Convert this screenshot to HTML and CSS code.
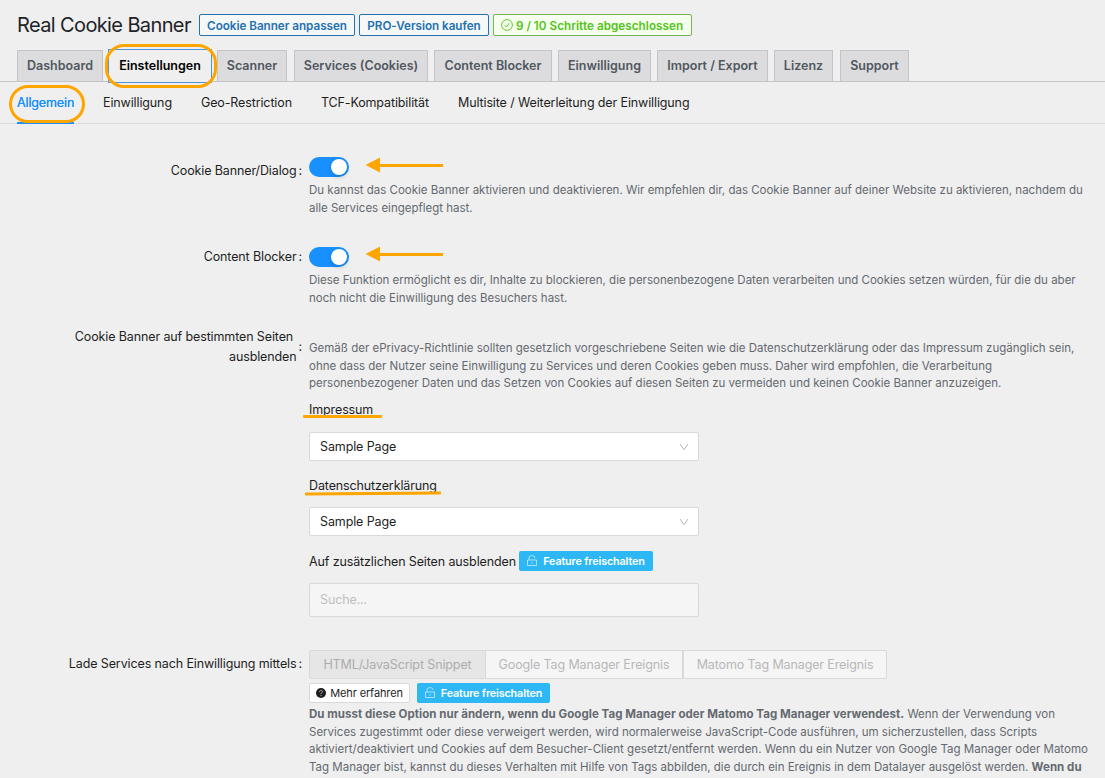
FILE: index.html
```
<!DOCTYPE html>
<html lang="de">
<head>
  <meta charset="UTF-8" />
  <meta name="viewport" content="width=device-width, initial-scale=1.0"/>
  <title>Real Cookie Banner</title>
  <link rel="stylesheet" href="styles.css">
</head>
<body>

  <svg class="icon-defs">
    <symbol id="lock" viewBox="0 0 10 11">
      <path d="M.5 5h9v5.5h-9zM2 5V3a2.3 2.3 0 0 1 2.3-2.3h1.4A2.3 2.3 0 0 1 8 2.7V3M5 7v1.6" fill="none" stroke="currentColor" stroke-width=".8"/>
    </symbol>
    <symbol id="chevron" viewBox="0 0 10 8">
      <path d="M1 1l4 5.6L9 1" fill="none" stroke="currentColor" stroke-width="1"/>
    </symbol>
    <symbol id="arrow" viewBox="0 0 78 16">
      <path d="M.5 8L15 .5v15z" fill="#ffa500"/>
      <path d="M13 8.500h65" stroke="#ffa500" stroke-width="2.800"/>
    </symbol>
  </svg>

  <header class="header">
    <h1>Real Cookie Banner</h1>
    <a class="button customize">Cookie Banner anpassen</a>
    <a class="button pro">PRO-Version kaufen</a>
    <a class="button steps">
      <svg width="12" height="12" viewBox="0 0 12 12"><circle cx="6" cy="6" r="5.4"/><path d="M3.700 6.100l1.700 1.900 2.900-3.800"/></svg>
      <span>9 / 10 Schritte abgeschlossen</span>
    </a>
  </header>

  <nav class="tabs">
    <a class="tab dashboard">Dashboard</a>
    <a class="tab settings active">Einstellungen<i class="mark mark-tab"></i></a>
    <a class="tab scanner">Scanner</a>
    <a class="tab services">Services (Cookies)</a>
    <a class="tab blocker">Content Blocker</a>
    <a class="tab consent">Einwilligung</a>
    <a class="tab import">Import / Export</a>
    <a class="tab license">Lizenz</a>
    <a class="tab support">Support</a>
  </nav>

  <nav class="subnav">
    <a class="current">Allgemein<i class="mark mark-sub"></i></a>
    <a>Einwilligung</a>
    <a>Geo-Restriction</a>
    <a>TCF-Kompatibilität</a>
    <a>Multisite / Weiterleitung der Einwilligung</a>
  </nav>

  <main class="form">
    <div class="row row-banner">
      <div class="label"><span>Cookie Banner/Dialog</span><b>:</b></div>
      <div class="field">
        <div class="switch-line"><span class="switch"></span><svg class="arrow"><use href="#arrow"/></svg></div>
        <p class="description">Du kannst das Cookie Banner aktivieren und deaktivieren. Wir empfehlen dir, das Cookie Banner auf deiner Website zu aktivieren, nachdem du<br>alle Services eingepflegt hast.</p>
      </div>
    </div>

    <div class="row row-blocker">
      <div class="label"><span>Content Blocker</span><b>:</b></div>
      <div class="field">
        <div class="switch-line"><span class="switch"></span><svg class="arrow"><use href="#arrow"/></svg></div>
        <p class="description">Diese Funktion ermöglicht es dir, Inhalte zu blockieren, die personenbezogene Daten verarbeiten und Cookies setzen würden, für die du aber<br>noch nicht die Einwilligung des Besuchers hast.</p>
      </div>
    </div>

    <div class="row row-pages">
      <div class="label"><span>Cookie Banner auf bestimmten Seiten&nbsp;<br>ausblenden</span><b>:</b></div>
      <div class="field">
        <p class="description">Gemäß der ePrivacy-Richtlinie sollten gesetzlich vorgeschriebene Seiten wie die Datenschutzerklärung oder das Impressum zugänglich sein,<br>ohne dass der Nutzer seine Einwilligung zu Services und deren Cookies geben muss. Daher wird empfohlen, die Verarbeitung<br>personenbezogener Daten und das Setzen von Cookies auf diesen Seiten zu vermeiden und keinen Cookie Banner anzuzeigen.</p>
        <div class="caption imprint">Impressum<i class="underline"></i></div>
        <div class="select"><span>Sample Page</span><svg><use href="#chevron"/></svg></div>
        <div class="caption privacy">Datenschutzerklärung<i class="underline"></i></div>
        <div class="select"><span>Sample Page</span><svg><use href="#chevron"/></svg></div>
        <div class="caption extra"><span>Auf zusätzlichen Seiten ausblenden</span><a class="unlock"><svg><use href="#lock"/></svg>Feature freischalten</a></div>
        <div class="search">Suche...</div>
      </div>
    </div>

    <div class="row row-load">
      <div class="label"><span>Lade Services nach Einwilligung mittels</span><b>:</b></div>
      <div class="field">
        <div class="radios">
          <span class="radio html checked">HTML/JavaScript Snippet</span>
          <span class="radio google">Google Tag Manager Ereignis</span>
          <span class="radio matomo">Matomo Tag Manager Ereignis</span>
        </div>
        <div class="actions">
          <a class="more"><svg width="10" height="10" viewBox="0 0 10 10"><circle cx="5" cy="5" r="5" fill="#1e1e1e"/><path d="M3.500 3.900c0-2 3-2 3-.2 0 1.100-1.500 1-1.500 2.100M5 6.800v1.100" fill="none" stroke="#bbb" stroke-width="1"/></svg>Mehr erfahren</a>
          <a class="unlock"><svg><use href="#lock"/></svg>Feature freischalten</a>
        </div>
        <p class="description"><strong>Du musst diese Option nur ändern, wenn du Google Tag Manager oder Matomo Tag Manager verwendest.</strong> Wenn der Verwendung von<br>Services zugestimmt oder diese verweigert werden, wird normalerweise JavaScript-Code ausführen, um sicherzustellen, dass Scripts<br>aktiviert/deaktiviert und Cookies auf dem Besucher-Client gesetzt/entfernt werden. Wenn du ein Nutzer von Google Tag Manager oder Matomo<br>Tag Manager bist, kannst du dieses Verhalten mit Hilfe von Tags abbilden, die durch ein Ereignis in dem Datalayer ausgelöst werden. <strong>Wenn du</strong></p>
      </div>
    </div>
  </main>

</body>
</html>
```
FILE: styles.css
```
* {
  box-sizing: border-box;
}
body {
  margin: 0;
  height: 778px;
  overflow: hidden;
  background-color: #efefef;
  color: #1e1e1e;
  font-family: Inter, "Liberation Sans", sans-serif;
  font-size: 12.5px;
  letter-spacing: -0.12px;
  white-space: nowrap;
}
.icon-defs {
  display: none;
}
.header {
  display: flex;
  align-items: center;
  gap: 4px;
  height: 50px;
  padding-left: 17px;
}
h1 {
  width: 178px;
  margin: 0;
  color: #1d2327;
  font-size: 20px;
  font-weight: 400;
  letter-spacing: -0.62px;
}
.button {
  display: flex;
  align-items: center;
  justify-content: center;
  gap: 3px;
  height: 22px;
  padding-top: 1px;
  border: 1px solid #2271b1;
  border-radius: 2px;
  background-color: #f6f7f7;
  color: #2271b1;
  font-size: 11.7px;
  font-weight: 600;
  letter-spacing: -0.03px;
}
.customize {
  width: 156px;
}
.pro {
  width: 130px;
}
.steps {
  width: 199px;
  padding-right: 1px;
  border-color: #77b359;
  background-color: #f6ffed;
  color: #52c41a;
  letter-spacing: 0.04px;
}
.steps svg {
  margin-top: -1px;
  fill: none;
  stroke: currentColor;
  stroke-width: 0.9;
}
.tabs {
  display: flex;
  height: 32px;
  padding-left: 17px;
  border-bottom: 1px solid #c3c4c7;
}
.tab {
  display: flex;
  align-items: center;
  justify-content: center;
  height: 31px;
  padding-bottom: 1px;
  border: 1px solid #c3c4c7;
  border-bottom: none;
  background-color: #dcdcde;
  color: #50575e;
  font-size: 12.5px;
  font-weight: 600;
  letter-spacing: 0;
}
.dashboard { width: 86px; margin-right: 5px; }
.settings { width: 104px; margin-right: 5px; }
.scanner { width: 70px; margin-right: 7px; }
.services { width: 134px; margin-right: 6px; }
.blocker { width: 118px; margin-right: 6px; }
.consent { width: 93px; margin-right: 6px; }
.import { width: 111px; margin-right: 6px; }
.license { width: 59px; margin-right: 7px; }
.support { width: 69px; }
.tab.active {
  position: relative;
  height: 34px;
  margin-top: -1px;
  padding-bottom: 2px;
  border: 1px solid #4f94d4;
  background-color: #efefef;
  color: #000;
}
.mark {
  position: absolute;
  border: 3px solid #ffa500;
  border-radius: 19px;
}
.mark-tab {
  top: -6px;
  left: -4px;
  width: 112px;
  height: 44px;
}
.subnav {
  display: flex;
  gap: 29px;
  height: 42px;
  padding-left: 17px;
  border-bottom: 1px solid #dcdcdc;
  line-height: 42px;
}
.subnav .current {
  position: relative;
  width: 57px;
  height: 42px;
  border-bottom: 2px solid #1890ff;
  color: #1890ff;
  text-shadow: 0 0 0.5px currentColor;
}
.mark-sub {
  top: 3px;
  left: -8px;
  width: 76px;
  height: 38px;
}
.form {
  padding-top: 33px;
}
.row {
  display: flex;
  gap: 7px;
}
.row-banner, .row-blocker {
  height: 90px;
}
.row-pages {
  height: 313px;
}
.label {
  display: flex;
  justify-content: flex-end;
  gap: 2px;
  width: 302px;
  line-height: 20px;
  text-align: right;
}
.label b {
  font-weight: 400;
}
.row-banner .label {
  padding-top: 4px;
}
.row-pages .label {
  align-items: center;
  height: 40px;
  margin-top: -10px;
}
.row-load .label {
  padding-top: 4px;
}
.field {
  width: 781px;
}
.switch-line {
  display: flex;
  align-items: center;
  gap: 16px;
  height: 20px;
}
.switch {
  width: 40px;
  height: 20px;
  padding: 2px 2px 2px 22px;
  border-radius: 10px;
  background-color: #1890ff;
}
.switch::after {
  content: "";
  display: block;
  width: 16px;
  height: 16px;
  border-radius: 50%;
  background-color: #fff;
  box-shadow: 0 2px 4px rgba(0, 35, 11, 0.2);
}
.arrow {
  width: 78px;
  height: 16px;
  margin-top: -4px;
}
.row-blocker .arrow {
  margin-top: -6px;
}
.description {
  margin: 5px 0 0;
  color: #646970;
  font-size: 11.5px;
  letter-spacing: 0;
  line-height: 17.600px;
}
.description strong {
  letter-spacing: 0.045px;
}
.row-pages .description {
  margin-top: 3px;
}
.caption {
  display: flex;
  position: relative;
  align-items: center;
  height: 20px;
}
.imprint {
  margin: 7px 0 12px;
}
.privacy {
  margin: 15px 0 11px;
}
.extra {
  gap: 3px;
  margin: 15px 0 12px;
}
.extra > span {
  padding-top: 1px;
}
.underline {
  position: absolute;
  height: 3px;
  border-radius: 1px;
  background-color: #ffa500;
}
.imprint .underline {
  top: 15px;
  left: -6px;
  width: 79px;
}
.privacy .underline {
  top: 16px;
  left: -4px;
  width: 136px;
  transform: rotate(-0.5deg);
}
.select, .search {
  display: flex;
  align-items: center;
  justify-content: space-between;
  width: 390px;
  height: 29px;
  padding: 0 9px 0 10px;
  border: 1px solid #d9d9d9;
  border-radius: 2px;
  background-color: #fff;
  letter-spacing: -0.12px;
}
.select svg {
  width: 10px;
  height: 8px;
  margin-top: 1px;
  color: #b5b5b5;
}
.search {
  height: 34px;
  background-color: #f5f5f5;
  color: #bfbfbf;
}
.unlock {
  display: flex;
  align-items: center;
  justify-content: center;
  gap: 6px;
  width: 134px;
  height: 20px;
  padding-top: 1px;
  border-radius: 2px;
  background-color: #2db7f5;
  color: #fff;
  font-size: 10.8px;
  font-weight: 600;
  letter-spacing: -0.15px;
}
.actions .unlock {
  width: 133px;
  padding-top: 0;
}
.unlock svg {
  width: 10px;
  height: 11px;
  margin-top: -1px;
  opacity: 0.75;
}
.radios {
  display: flex;
  height: 29px;
}
.radio {
  display: flex;
  align-items: center;
  justify-content: center;
  padding-bottom: 1px;
  border: 1px solid #d9d9d9;
  background-color: #f5f5f5;
  color: #b8b8b8;
}
.radio.checked {
  background-color: #e6e6e6;
  color: #adadad;
}
.html { width: 177px; border-radius: 2px 0 0 2px; }
.google { width: 197px; border-left: none; }
.matomo { width: 204px; border-radius: 0 2px 2px 0; }
.actions {
  display: flex;
  gap: 7px;
  margin-top: 4px;
}
.more {
  display: flex;
  align-items: center;
  justify-content: center;
  gap: 4px;
  width: 101px;
  height: 20px;
  border: 1px solid #d9d9d9;
  border-radius: 2px;
  background-color: #fff;
  font-size: 11px;
}
.row-load .description {
  margin-top: 3px;
}
```
